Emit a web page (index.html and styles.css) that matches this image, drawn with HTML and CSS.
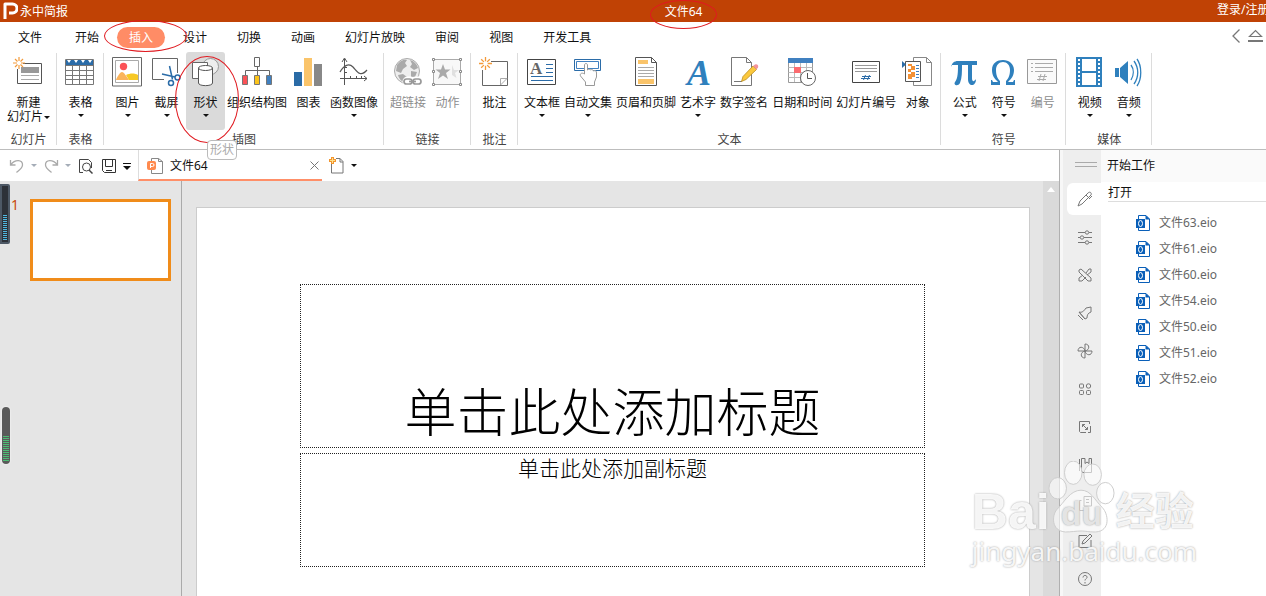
FILE: index.html
```html
<!DOCTYPE html>
<html lang="zh-CN">
<head>
    <meta charset="UTF-8">
    <meta name="viewport" content="width=device-width, initial-scale=1.0">
    <title>永中简报</title>
    <link rel="stylesheet" href="styles.css">
</head>
<body>
    <svg width="0" height="0" class="defs" aria-hidden="true">
        <symbol id="eio" viewBox="0 0 16 18">
            <path d="M3.500 5V1.500H11L14.500 5v11.500h-11V14" fill="#fff" stroke="#0a5fb8"/>
            <path d="M10.500 1v4.500H15z" fill="#0a5fb8"/>
            <path d="M1 5h9v9H1z" fill="#0a5fb8"/>
            <ellipse cx="5.500" cy="9.500" rx="2" ry="3" fill="none" stroke="#fff"/>
        </symbol>
        <symbol id="spark" viewBox="0 0 12 12">
            <path d="M6 0v4M6 8v4M0 6h4M8 6h4M2 2l2.500 2.500M7.500 7.500L10 10M10 2L7.500 4.500M4.500 7.500L2 10" stroke="#f39a3a" stroke-width="1.200"/>
        </symbol>
    </svg>

    <header class="titlebar">
        <div class="brand">
            <svg width="15" height="18" viewBox="0 0 15 18"><path d="M2 17V2h7.500a4 4 0 0 1 0 9H6" fill="none" stroke="#fff" stroke-width="3" stroke-linejoin="round"/></svg>
            <span>永中简报</span>
        </div>
        <div class="doc-name"><span class="marked">文件64<i class="ring ring-title"></i></span></div>
        <a class="login" href="#">登录/注册</a>
    </header>

    <nav class="tabs">
        <button class="tab tab-file">文件</button>
        <button class="tab">开始</button>
        <button class="tab active">插入<i class="ring ring-tab"></i></button>
        <button class="tab">设计</button>
        <button class="tab">切换</button>
        <button class="tab">动画</button>
        <button class="tab">幻灯片放映</button>
        <button class="tab">审阅</button>
        <button class="tab">视图</button>
        <button class="tab">开发工具</button>
        <div class="tab-tools">
            <button aria-label="向左"><svg width="10" height="16" viewBox="0 0 10 16"><path d="M8.500 1.500L2 8l6.500 6.500" fill="none" stroke="#777" stroke-width="1.300"/></svg></button>
            <button aria-label="收起"><svg width="15" height="16" viewBox="0 0 15 16"><path d="M1.500 8.500l6-6 6 6z" fill="none" stroke="#777" stroke-width="1.200"/><path d="M0 13h15" stroke="#777" stroke-width="2"/></svg></button>
        </div>
    </nav>

    <div class="ribbon">
        <section class="group">
            <div class="items">
                <button class="item wide">
                    <svg class="icon" viewBox="0 0 30 30"><path d="M10 6.500h18.500v20h-24V12" fill="#fff" stroke="#555"/><path d="M8 10h18v6H8z" fill="#999"/><path d="M8 18.500h18M8 22.500h18" stroke="#aaa"/><use href="#spark" x="0" y="0" width="12" height="12"/></svg>
                    <span>新建</span><span class="inline">幻灯片<i class="caret"></i></span>
                </button>
            </div>
            <h2>幻灯片</h2>
        </section>
        <section class="group">
            <div class="items">
                <button class="item">
                    <svg class="icon" viewBox="0 0 30 30"><path d="M.5 2.500h28v25H.5z" fill="#fff"/><path d="M1 3h27v5H1z" fill="#2b6ca8"/><path d="M2 3h4L4 6zM9 3h4l-2 3zM16 3h4l-2 3zM23 3h4l-2 3z" fill="#fff"/><path d="M.5 2.500h28v25H.5zM1 8.500h27M1 13.500h27M1 18.500h27M1 22.500h27M7.500 8v19M14.500 8v19M21.500 8v19" fill="none" stroke="#777"/></svg>
                    <span>表格</span><i class="caret"></i>
                </button>
            </div>
            <h2>表格</h2>
        </section>
        <section class="group">
            <div class="items">
                <button class="item">
                    <svg class="icon" viewBox="0 0 30 30"><path d="M.5.5h29v28.500H.5z" fill="#fff" stroke="#666"/><path d="M3.500 3.500h23v22h-23z" fill="#fff" stroke="#aaa"/><circle cx="11.500" cy="9.500" r="3.700" fill="#fb5257"/><path d="M4 23c1-3 4-8 6-8s5 5 7 8z" fill="#fbb45c"/><path d="M14 18c4-2 9-2 12 0v5h-9z" fill="#f7c825"/></svg>
                    <span>图片</span><i class="caret"></i>
                </button>
                <button class="item">
                    <svg class="icon" viewBox="0 0 30 30"><path d="M26.500 16V1.500h-25v21H13" fill="#fff" stroke="#666"/><g fill="none" stroke="#2b6ca8" stroke-width="1.500"><path d="M18.500 9l3 13.500M11 17l13 3" /><circle cx="20" cy="26" r="2.500"/><circle cx="26.500" cy="20.500" r="2.500"/></g></svg>
                    <span>截屏</span><i class="caret"></i>
                </button>
                <button class="item pressed">
                    <svg class="icon" viewBox="0 0 30 30"><circle cx="20.500" cy="9.500" r="8" fill="#eee" stroke="#999"/><path d="M2.500 5.500h15v16h-15z" fill="#fff" stroke="#666"/><path d="M8.500 11v15c0 3.500 14 3.500 14 0V11" fill="#fff" stroke="#555"/><ellipse cx="15.500" cy="11" rx="7" ry="2.500" fill="#fff" stroke="#555"/></svg>
                    <span>形状</span><i class="caret"></i>
                    <i class="ring ring-shape"></i>
                    <span class="tooltip">形状</span>
                </button>
                <button class="item">
                    <svg class="icon org" viewBox="0 0 32 30"><path d="M13.500.5h5v9h-5zM16.500 10v8M4.500 18v-4.500h24V18" fill="none" stroke="#666"/><path d="M1.500 18.500h5v9h-5z" fill="#fb5257" stroke="#777"/><path d="M13.500 18.500h5v9h-5z" fill="#fcc419" stroke="#777"/><path d="M25.500 18.500h5v9h-5z" fill="#4080c0" stroke="#777"/></svg>
                    <span>组织结构图</span>
                </button>
                <button class="item">
                    <svg class="icon" viewBox="0 0 30 30"><path d="M1 15h8v14H1z" fill="#2a6ba6"/><path d="M11 1h8v28h-8z" fill="#fac46a"/><path d="M21 7h8v22h-8z" fill="#888"/></svg>
                    <span>图表</span>
                </button>
                <button class="item">
                    <svg class="icon" viewBox="0 0 30 30"><path d="M5.500 28V2M3 5l2.500-4L8 5M1 21.500h27M25 19l3 2.500-3 2.500M6 10.500h2M6 15.500h2M11.500 21v-2M17.500 21v-2M22.500 21v-2" fill="none" stroke="#555"/><path d="M1 15C5 8 10 6 14 10s7 11 14 3" fill="none" stroke="#555" stroke-width="1.200"/></svg>
                    <span>函数图像</span><i class="caret"></i>
                </button>
            </div>
            <h2>插图</h2>
        </section>
        <section class="group">
            <div class="items">
                <button class="item" disabled>
                    <svg class="icon" viewBox="0 0 30 30"><circle cx="14" cy="14" r="12.500" fill="#eee" stroke="#aaa"/><path d="M4 8c3-5 8-6 10-5l-2 3 2 3-4 3-2 4-5-2zM17 3c4 1 7 4 8 8l-4 2-4-3 2-3zM5 18l5-1 4 3-1 6c-4-1-7-4-8-8zM18 14l6 1-2 5-4 1z" fill="#aaa"/><g fill="none" stroke="#fff" stroke-width="5"><rect x="12" y="22" width="8" height="5" rx="2.500"/><rect x="20" y="22" width="8" height="5" rx="2.500"/></g><g fill="none" stroke="#999" stroke-width="1.700"><rect x="11" y="22" width="8" height="5" rx="2.500"/><rect x="20" y="22" width="8" height="5" rx="2.500"/><path d="M16 24.500h7"/></g></svg>
                    <span>超链接</span>
                </button>
                <button class="item" disabled>
                    <svg class="icon" viewBox="0 0 30 30"><path d="M1.500 2.500h27v25h-27z" fill="#f8f8f8" stroke="#aaa"/><path d="M20 8l2 5h5l-4 3 1.500 5-4.500-3z" fill="#e0e0e0"/><path d="M11 7l2 5.500h5.500l-4.500 3.500 2 6-5-3.500L6 22l2-6-4.500-3.500H9z" fill="#aaa"/><path d="M.5 1.500h2v2h-2zM27.500 1.500h2v2h-2zM.5 26.500h2v2h-2zM27.500 26.500h2v2h-2zM.5 13.500h2v2h-2zM27.500 13.500h2v2h-2z" fill="#fff" stroke="#888"/></svg>
                    <span>动作</span>
                </button>
            </div>
            <h2>链接</h2>
        </section>
        <section class="group">
            <div class="items">
                <button class="item">
                    <svg class="icon" viewBox="0 0 30 30"><path d="M12 4.500h16.500v24h-25V13" fill="#fff" stroke="#666"/><path d="M21.500 28v-6.500H28z" fill="#fff" stroke="#aaa"/><use href="#spark" x="0" y="0" width="13" height="13"/></svg>
                    <span>批注</span>
                </button>
            </div>
            <h2>批注</h2>
        </section>
        <section class="group">
            <div class="items">
                <button class="item">
                    <svg class="icon" viewBox="0 0 30 30"><path d="M.5 2.500h28v25H.5z" fill="#fff" stroke="#444"/><text x="3" y="17" class="glyph" font-size="17" fill="#666">A</text><path d="M19 7.500h7M19 11.500h7M19 15.500h7M4 19.500h22M4 23.500h22" stroke="#2b6ca8"/></svg>
                    <span>文本框</span><i class="caret"></i>
                </button>
                <button class="item">
                    <svg class="icon" viewBox="0 0 30 30"><path d="M1.500 2.500h26v11h-26z" fill="#fff" stroke="#2b6ca8"/><path d="M3.500 4.500h22v7h-22z" fill="#fff" stroke="#4080c0"/><path d="M11.500 17V8c0-2 3-2 3 0v5c1-1 3-1 3 0 1-1 3 0 3 1 2-1 3 0 3 2v4l-2 5v3.500h-9V25l-5-6c-1-2 1-4 4-2z" fill="#fff" stroke="#999"/></svg>
                    <span>自动文集</span><i class="caret"></i>
                </button>
                <button class="item">
                    <svg class="icon" viewBox="0 0 30 30"><path d="M4.500.5h16l5 5v23h-21z" fill="#fff" stroke="#555"/><path d="M20.500.5v5h5" fill="none" stroke="#555"/><path d="M7 3h10v4H7zM7 22h16v5H7z" fill="#fac46a"/><path d="M7 10.500h16M7 13.500h16M7 16.500h16M7 19.500h16" stroke="#aaa"/></svg>
                    <span>页眉和页脚</span>
                </button>
                <button class="item">
                    <svg class="icon" viewBox="0 0 30 30"><text x="4" y="28" class="glyph" font-size="36" font-style="italic" fill="#2f80bd">A</text></svg>
                    <span>艺术字</span><i class="caret"></i>
                </button>
                <button class="item">
                    <svg class="icon" viewBox="0 0 30 30"><path d="M2.500.5h15l5 5v23h-20z" fill="#fff" stroke="#777"/><path d="M17.500.5v5h5M5 24.500h8" fill="none" stroke="#777"/><path d="M12.500 24.500l1.500-5L24 9l3.500 3.500-10.500 10z" fill="#fbc83d" stroke="#b98b20" stroke-width=".8"/><path d="M24 9l2-1.500c2-1 4 1 3 3l-1.500 2z" fill="#f3949a"/></svg>
                    <span>数字签名</span>
                </button>
                <button class="item">
                    <svg class="icon" viewBox="0 0 30 30"><path d="M1.500 1.500h24v24h-24z" fill="#fff" stroke="#999"/><path d="M1 1h25v5H1z" fill="#4080c0"/><path d="M1.500 10.500h24M1.500 15.500h24M1.500 20.500h24M7.500 6v19M13.500 6v19M19.500 6v19" stroke="#bbb"/><path d="M7 10h7v6H7z" fill="#fb6b6f"/><circle cx="21" cy="21" r="7.500" fill="#fff" stroke="#666"/><path d="M20.500 16v5.500H25" fill="none" stroke="#555"/></svg>
                    <span>日期和时间</span>
                </button>
                <button class="item">
                    <svg class="icon" viewBox="0 0 30 30"><path d="M1.500 4.500h27v21h-27z" fill="#fff" stroke="#444"/><path d="M4 8.500h22M4 11.500h22M4 14.500h22" stroke="#999"/><path d="M11 19.500h9M10 21.500h9M14.500 18l-2 5M18.500 18l-2 5" stroke="#2b6ca8"/></svg>
                    <span>幻灯片编号</span>
                </button>
                <button class="item">
                    <svg class="icon" viewBox="0 0 30 30"><path d="M11.500.5h13l5 5v23h-18z" fill="#fff" stroke="#888"/><path d="M24.500.5v5h5" fill="none" stroke="#888"/><path d="M3.500 4.500h15v20h-15z" fill="#fff" stroke="#555"/><path d="M6 7h4v2h3v4h-4v2h4v5h-3v2H6v-5h3v-2H6v-3h3V9H6z" fill="#f39136"/><path d="M14 8.500h3M14 11.500h3M14 14.500h3M14 17.500h3M14 20.500h3" stroke="#4080c0"/><path d="M0 4l4 3.500L0 11z" fill="#2b6ca8"/></svg>
                    <span>对象</span>
                </button>
            </div>
            <h2>文本</h2>
        </section>
        <section class="group">
            <div class="items">
                <button class="item">
                    <svg class="icon" viewBox="0 0 30 30"><path d="M2 10c1-4 3-6 7-6h19v4H2zM9 7h4c0 8 0 14-2 19-2 4-7 2-5-1 3-4 3-10 3-18zM19 7h4v14c0 4 2 4 4 1 0 8-8 8-8 0z" fill="#2f80bd"/></svg>
                    <span>公式</span><i class="caret"></i>
                </button>
                <button class="item">
                    <svg class="icon" viewBox="0 0 30 30"><path d="M3 28v-5h1l1 2h5c-3-3-6-6-6-12C4 6 9 3 15 3s11 4 11 10c0 6-3 9-6 12h5l1-2h1v5h-9v-4c2-2 4-5 4-11 0-5-3-8-7-8s-7 3-7 8c0 6 2 9 4 11v4z" fill="#2f80bd"/></svg>
                    <span>符号</span><i class="caret"></i>
                </button>
                <button class="item" disabled>
                    <svg class="icon" viewBox="0 0 30 30"><path d="M.5 2.500h29v24H.5z" fill="#fafafa" stroke="#999"/><path d="M8 6.500h18M8 10.500h18M8 14.500h18M4 6.500h2M4 10.500h2M4 14.500h2M11 19.500h9M10 22.500h9M14 17l-2 7M18 17l-2 7" stroke="#aaa"/></svg>
                    <span>编号</span>
                </button>
            </div>
            <h2>符号</h2>
        </section>
        <section class="group">
            <div class="items">
                <button class="item">
                    <svg class="icon" viewBox="0 0 30 30"><path d="M2 0h26v30H2z" fill="#2f80bd"/><path d="M8 2h14v12H8zM8 16h14v12H8z" fill="#fff"/><path d="M5 2v27M25 2v27" stroke="#fff" stroke-width="2" stroke-dasharray="2 2"/></svg>
                    <span>视频</span><i class="caret"></i>
                </button>
                <button class="item">
                    <svg class="icon" viewBox="0 0 30 30"><path d="M2 11h4v9H2zM7 11l8-7v23l-8-7z" fill="#2f80bd"/><path d="M18 8c3 4 3 10 0 15M21 4c5 7 5 16 0 23M24 2c5 7 5 20 0 27" fill="none" stroke="#2f80bd" stroke-width="1.300"/></svg>
                    <span>音频</span><i class="caret"></i>
                </button>
            </div>
            <h2>媒体</h2>
        </section>
    </div>

    <main class="content">
        <div class="editor">
            <div class="quickbar">
                <div class="quick">
                    <button aria-label="撤销"><svg width="16" height="16" viewBox="0 0 16 16"><path d="M1.500 2v5h5M2 6.500C6 1 14 1.500 13.500 7c0 3-3 5-6 7.500" fill="none" stroke="#aaa" stroke-width="1.300"/></svg></button>
                    <button aria-label="撤销列表"><i class="caret pale"></i></button>
                    <button aria-label="重做"><svg width="16" height="16" viewBox="0 0 16 16"><path d="M14.500 2v5h-5M14 6.500C10 1 2 1.500 2.500 7c0 3 3 5 6 7.500" fill="none" stroke="#aaa" stroke-width="1.300"/></svg></button>
                    <button aria-label="重做列表"><i class="caret pale"></i></button>
                    <button class="preview" aria-label="打印预览"><svg width="16" height="16" viewBox="0 0 16 16"><path d="M5 14.500H1.500V1.500h9l3 3V10" fill="none" stroke="#444"/><circle cx="8.500" cy="9" r="4" fill="none" stroke="#444"/><path d="M11 12l3.500 3.500" stroke="#444" stroke-width="1.500"/></svg></button>
                    <button class="save" aria-label="保存"><svg width="16" height="16" viewBox="0 0 16 16"><path d="M1.500 1.500h13v13h-11l-2-2zM4.500 1.500v7h7v-7M5 12.500h6" fill="none" stroke="#333"/></svg></button>
                    <button class="more" aria-label="更多"><i class="caret"></i></button>
                </div>
                <div class="doc-tab">
                    <svg width="16" height="16" viewBox="0 0 16 16"><path d="M4.500 3V.5h7l4 3v12h-11V12" fill="#fff" stroke="#888"/><path d="M11.500.5v3h4" fill="none" stroke="#888"/><rect x="0" y="3" width="9" height="9" rx="2" fill="#ff8a4e"/><path d="M3.500 10V5.500h2a1.500 1.500 0 0 1 0 3h-2" fill="none" stroke="#fff"/></svg>
                    <span>文件64</span>
                    <button aria-label="关闭"><svg width="9" height="9" viewBox="0 0 9 9"><path d="M.5.5l8 8M8.500.5l-8 8" stroke="#777"/></svg></button>
                </div>
                <div class="quick new-doc">
                    <button aria-label="新建文档"><svg width="16" height="17" viewBox="0 0 16 17"><path d="M7 1.500h4l3 3v11.500H2.500V7" fill="#fff" stroke="#777"/><path d="M11 1.500v3.500H14" fill="none" stroke="#777"/><path d="M3.500 0v7M0 3.500h7" stroke="#f2952f" stroke-width="3"/><path d="M3.500 1v5M1 3.500h5" stroke="#ffe08a"/></svg></button>
                    <button aria-label="新建列表"><i class="caret"></i></button>
                </div>
            </div>
            <div class="workspace">
                <div class="thumbs">
                    <span class="num">1</span>
                    <button class="thumb" aria-label="幻灯片 1"></button>
                </div>
                <div class="stage">
                    <div class="slide">
                        <h1 class="placeholder title">单击此处添加标题</h1>
                        <p class="placeholder subtitle">单击此处添加副标题</p>
                    </div>
                </div>
                <div class="scrollbar"><i></i></div>
            </div>
        </div>

        <aside class="side">
            <div class="dock">
                <div class="grip"></div>
                <button class="selected" aria-label="开始工作"><svg viewBox="0 0 16 16"><path d="M1 15l2-5 8-8c2-2 4 0 3 2l-9 9zM9 4l3 3M12 8l3-3" /></svg></button>
                <button aria-label="属性"><svg viewBox="0 0 16 16"><path d="M1 3.500h7M12 3.500h3M1 8.500h2M7 8.500h8M1 13.500h7M12 13.500h3"/><circle cx="10" cy="3.500" r="1.700"/><circle cx="5" cy="8.500" r="1.700"/><circle cx="10" cy="13.500" r="1.700"/></svg></button>
                <button aria-label="工具"><svg viewBox="0 0 16 16"><path d="M2 3l2-1 10 9v3h-3L2 5zM9 6l3-4h2v3l-4 3M6 8l-4 3v3h3l4-4"/></svg></button>
                <button aria-label="样式"><svg viewBox="0 0 16 16"><path d="M2 7c3 1 5-1 7-4l5-1v5c-3 1-4 3-4 6l-2 1zM2 7l6 7M1 10l5 5"/></svg></button>
                <button aria-label="动画"><svg viewBox="0 0 16 16"><path d="M8 8V1c5 0 5 6 0 7zM8 8h7c0 5-6 5-7 0zM8 8v7c-5 0-5-6 0-7zM8 8H1c0-5 6-5 7 0z"/></svg></button>
                <button aria-label="素材"><svg viewBox="0 0 16 16"><rect x="2.500" y="3" width="4" height="4" rx="1"/><circle cx="11.500" cy="5" r="2.200"/><rect x="2.500" y="9.500" width="4" height="4" rx="1"/><rect x="9.500" y="9.500" width="4" height="4" rx="1"/></svg></button>
                <button aria-label="切换"><svg viewBox="0 0 16 16"><path d="M9 13.500H3.500L2.500 12.500v-10h10V5M5.500 8V5.500H8M5.500 5.500l5 5M10.500 8v2.500H8M13.500 7v6.500H11"/></svg></button>
                <button aria-label="书签"><svg viewBox="0 0 16 16"><path d="M4.500 1.500H8v5l2-1.500 2 1.500v-5h2.500v14h-9L4.500 14zM2.500 2v12"/></svg></button>
                <button aria-label="复制"><svg viewBox="0 0 16 16"><path d="M7 1.500h7.500V11H7zM9 4.500h3M9 7.500h3M4.500 5.500h-2v10h8v-2"/></svg></button>
                <button aria-label="编辑"><svg viewBox="0 0 16 16"><path d="M10 2.500H2v12h12V7M5 11l1-3 7-7 2 2-7 7z"/></svg></button>
                <button aria-label="帮助"><svg viewBox="0 0 16 16"><circle cx="8" cy="8" r="6.500"/><path d="M6 6.500c0-3 4.500-2.500 4 0C9.500 8 8 8 8 9.500M8 11v1.500"/></svg></button>
            </div>
            <div class="panel">
                <h2>开始工作</h2>
                <h3>打开</h3>
                <ul>
                    <li><a href="#"><svg><use href="#eio"/></svg>文件63.eio</a></li>
                    <li><a href="#"><svg><use href="#eio"/></svg>文件61.eio</a></li>
                    <li><a href="#"><svg><use href="#eio"/></svg>文件60.eio</a></li>
                    <li><a href="#"><svg><use href="#eio"/></svg>文件54.eio</a></li>
                    <li><a href="#"><svg><use href="#eio"/></svg>文件50.eio</a></li>
                    <li><a href="#"><svg><use href="#eio"/></svg>文件51.eio</a></li>
                    <li><a href="#"><svg><use href="#eio"/></svg>文件52.eio</a></li>
                </ul>
            </div>
        </aside>
    </main>

    <div class="meter meter-top"><i></i></div>
    <div class="meter meter-low"><i></i></div>

    <div class="watermark">
        <div class="wm-logo">
            <span>Bai</span>
            <div class="paw">
                <svg width="68" height="72" viewBox="0 0 70 74"><g fill="#fff" fill-opacity=".6" stroke="#ccc"><ellipse cx="10" cy="28" rx="9" ry="11"/><ellipse cx="26" cy="12" rx="9" ry="12"/><ellipse cx="46" cy="14" rx="9" ry="11"/><ellipse cx="59" cy="33" rx="9" ry="11"/><path d="M34 30c10 0 14 10 22 18 6 6 9 24-7 25-8 0-10-1-15-1s-10 1-16 1C3 72 4 56 9 50c8-8 14-20 25-20z"/></g></svg>
                <span>du</span>
            </div>
            <span class="wm-cn">经验</span>
        </div>
        <div class="wm-url">jingyan.baidu.com</div>
    </div>
</body>
</html>
```

FILE: styles.css
```css
* {
    box-sizing: border-box;
}
body {
    margin: 0;
    height: 100vh;
    display: flex;
    flex-direction: column;
    overflow: hidden;
    font-family: "Noto Sans", "Noto Sans CJK SC", sans-serif;
    font-size: 12px;
    line-height: 14px;
    color: #111;
    background: #fff;
}
button {
    font: inherit;
    color: inherit;
    background: none;
    border: 0;
    padding: 0;
    white-space: nowrap;
}
a {
    color: inherit;
    text-decoration: none;
}
h1, h2, h3, p, ul {
    margin: 0;
    padding: 0;
    font-size: inherit;
    font-weight: normal;
}
svg {
    display: block;
    flex: none;
}
.defs {
    position: absolute;
}
.caret {
    display: block;
    border: 3px solid transparent;
    border-top-color: currentColor;
    border-bottom: 0;
}
.pale {
    color: #a5adb8;
}

/* title bar */
.titlebar {
    display: flex;
    align-items: center;
    height: 22px;
    flex: none;
    padding-top: 2px;
    color: #fff;
    background: #c04205;
}
.brand {
    display: flex;
    align-items: center;
    gap: 2px;
    width: 150px;
    padding-left: 3px;
}
.brand svg {
    margin-bottom: 2px;
}
.doc-name {
    flex: 1;
    text-align: center;
}
.login {
    width: 49px;
    overflow: hidden;
    white-space: nowrap;
    padding-bottom: 4px;
}

/* hand-drawn style circles */
.marked {
    position: relative;
}
.ring {
    position: absolute;
    z-index: 5;
    border: 1px solid #e01a20;
    border-radius: 50%;
    pointer-events: none;
}
.ring-title {
    inset: -3px -15px -9px;
}
.ring-tab {
    inset: -7px -22px -4px -13px;
}
.ring-shape {
    inset: 4px -14px -13px -11px;
}

/* menu tabs */
.tabs {
    display: flex;
    align-items: center;
    height: 30px;
    flex: none;
    padding-top: 1px;
}
.tab {
    height: 21px;
    padding: 0 12px;
    margin: 0 3px;
    border-radius: 11px;
}
.tab-file {
    margin: 0 6px;
}
.tab.active {
    position: relative;
    color: #fff;
    background: #ff8c66;
}
.tab-tools {
    display: flex;
    gap: 7px;
    margin-left: auto;
    padding: 0 3px 3px 0;
}

/* ribbon */
.ribbon {
    display: flex;
    height: 98px;
    flex: none;
    border-bottom: 1px solid #bdbdbd;
}
.group {
    position: relative;
    flex: none;
    padding: 0 3px 0 4px;
    border-right: 1px solid transparent;
    border-image: linear-gradient(transparent 2%, #dcdcdc 2%, #dcdcdc 95%, transparent 95%) 1;
}
.items {
    display: flex;
    height: 81px;
}
.group h2 {
    text-align: center;
    color: #444;
}
.item {
    position: relative;
    display: flex;
    flex-direction: column;
    align-items: center;
    min-width: 39px;
    height: 78px;
    padding: 5px 2px 0;
}
.item.wide {
    min-width: 49px;
}
.item:disabled {
    color: #8c8c8c;
}
.item.pressed {
    background: #dadada;
    border-radius: 3px;
}
.icon {
    width: 30px;
    height: 30px;
    margin: 0 1px 9px 0;
}
.icon.org {
    width: 32px;
}
.item > .caret {
    margin-top: 4px;
}
.inline {
    display: flex;
    align-items: center;
    gap: 1px;
}
.glyph {
    font-family: "Liberation Serif", serif;
    font-weight: bold;
}
.tooltip {
    position: absolute;
    z-index: 6;
    top: 88px;
    left: 21px;
    padding: 2px;
    color: #aaa;
    background: #fff;
    border: 1px solid #bbb;
    border-radius: 4px;
}

/* editor */
.content {
    display: grid;
    grid-template-columns: 1fr 206px;
    flex: 1;
    min-height: 0;
}
.editor {
    display: flex;
    flex-direction: column;
    min-width: 0;
    border-right: 1px solid #b0b0b0;
}
.quickbar {
    display: flex;
    height: 31px;
    flex: none;
}
.quick {
    display: flex;
    align-items: center;
    gap: 6px;
    width: 138px;
    padding-left: 9px;
}
.preview,
.save {
    margin-left: 1px;
}
.more .caret {
    border-width: 4px;
    border-bottom: 0;
}
.more {
    padding-top: 1px;
}
.more::before {
    content: "";
    display: block;
    width: 8px;
    height: 1px;
    margin-bottom: 2px;
    background: #111;
}
.doc-tab {
    display: flex;
    align-items: center;
    gap: 7px;
    width: 184px;
    padding: 2px 3px 0 8px;
    border-bottom: 2px solid #ff8f68;
    border-left: 1px solid #ddd;
}
.doc-tab button {
    margin-left: auto;
}
.new-doc {
    padding-left: 7px;
}
.workspace {
    display: flex;
    flex: 1;
    min-height: 0;
    background: #e5e5e5;
}
.thumbs {
    display: flex;
    align-items: flex-start;
    gap: 11px;
    width: 182px;
    padding: 18px 10px 0 11px;
    border-right: 1px solid #aaa;
}
.num {
    width: 8px;
    font-size: 14px;
    line-height: 12px;
    color: #c8490c;
}
.thumb {
    flex: 1;
    height: 82px;
    background: #fff;
    border: 3px solid #f08c1a;
}
.stage {
    display: flex;
    flex: 1;
    padding: 26px 13px 0 14px;
}
.slide {
    flex: 1;
    padding: 76px 104px 0 103px;
    background: #fff;
    border: 1px solid #ccc;
    border-bottom: 0;
}
.placeholder {
    color: #000;
    text-align: center;
    border: 1px dotted #222;
}
.title {
    display: flex;
    align-items: flex-end;
    justify-content: center;
    height: 164px;
    padding-bottom: 5px;
    font-size: 52px;
    font-weight: 300;
    line-height: 60px;
}
.subtitle {
    height: 114px;
    margin-top: 5px;
    padding-top: 2px;
    font-size: 21px;
    font-weight: 300;
    line-height: 25px;
}
.scrollbar {
    width: 16px;
    padding: 6px 4px;
    background: #dadada;
}
.scrollbar i {
    display: block;
    border: 4px solid transparent;
    border-top: 0;
    border-bottom: 5px solid #fff;
}

/* right side */
.side {
    display: flex;
    padding-left: 3px;
    background: #f7f7f7;
}
.dock {
    display: flex;
    flex-direction: column;
    align-items: flex-end;
    width: 38px;
    background: #eee;
}
.grip {
    width: 22px;
    height: 5px;
    margin: 12px 4px 13px;
    border: 1px solid #aaa;
    border-width: 1px 0;
}
.dock button {
    display: flex;
    align-items: center;
    justify-content: center;
    flex: none;
    width: 34px;
    height: 32px;
    margin: 3px 0;
    padding-left: 2px;
    border-radius: 6px 0 0 6px;
}
.dock .selected {
    background: #fff;
}
.dock svg {
    width: 16px;
    height: 16px;
    fill: none;
    stroke: #777;
}
.panel {
    flex: 1;
    background: #fff;
}
.panel h2 {
    height: 32px;
    padding: 9px 6px;
    background: #fafafa;
}
.panel h3 {
    margin-left: 7px;
    padding: 4px 0 1px;
    border-bottom: 1px solid #ddd;
}
.panel ul {
    padding: 8px 0 0 34px;
    list-style: none;
}
.panel li a {
    display: flex;
    align-items: center;
    gap: 8px;
    height: 26px;
    color: #666;
}
.panel li svg {
    width: 16px;
    height: 18px;
}

/* floating meters at the window edge */
.meter {
    position: absolute;
    display: flex;
    align-items: flex-end;
}
.meter i {
    flex: 1;
}
.meter-top {
    left: 0;
    top: 184px;
    width: 10px;
    height: 60px;
    padding: 2px 1px;
    background: #2d3138;
    border: 2px solid #4d5865;
    border-radius: 0 2px 2px 0;
}
.meter-top i {
    height: 25px;
    background: repeating-linear-gradient(#4fb8e0 0 1px, #2d3138 1px 2px);
}
.meter-low {
    left: 2px;
    top: 407px;
    width: 8px;
    height: 57px;
    padding: 0 1px 2px;
    background: #5a5a5a;
    border-radius: 4px;
    box-shadow: 0 0 2px #fff;
}
.meter-low i {
    height: 26px;
    background: repeating-linear-gradient(#4dbd74 0 1px, #5a5a5a 1px 2px);
}

/* watermark */
.watermark {
    position: absolute;
    right: 69px;
    bottom: 27px;
    z-index: 10;
    color: rgba(255, 255, 255, 0.9);
    font-family: "Liberation Sans", "Noto Sans CJK SC", sans-serif;
    text-shadow: 0 0 2px #999;
    pointer-events: none;
}
.wm-logo {
    display: flex;
    align-items: flex-end;
    font-size: 50px;
    font-weight: bold;
    line-height: 42px;
}
.paw {
    position: relative;
    margin-left: -2px;
}
.paw span {
    position: absolute;
    left: 13px;
    bottom: 2px;
    font-size: 34px;
    line-height: 36px;
    color: #e4e4e4;
}
.wm-cn {
    font-size: 39px;
}
.wm-url {
    font-family: "Noto Sans", sans-serif;
    font-size: 26px;
    line-height: 36px;
}
```
